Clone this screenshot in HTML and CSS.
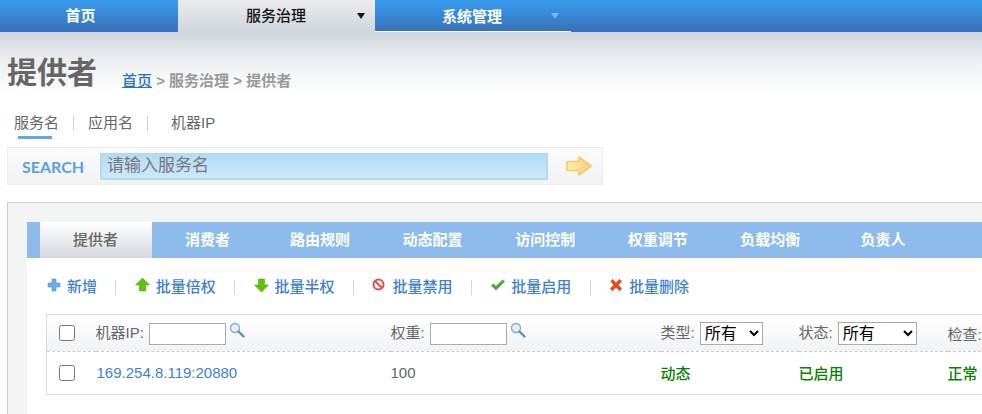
FILE: index.html
```html
<!DOCTYPE html>
<html lang="zh-CN">
<head>
<meta charset="utf-8">
<title>提供者</title>
<link rel="stylesheet" href="styles.css">
</head>
<body>
<nav class="nav">
  <a class="nav-item nav-home">首页</a>
  <a class="nav-item nav-active">服务治理<span class="caret caret-dark"></span></a>
  <a class="nav-item nav-sys">系统管理<span class="caret caret-light"></span></a>
</nav>
<main class="page">
  <header class="head">
    <h1 class="title">提供者</h1>
    <div class="crumbs"><a class="crumb-link">首页</a> &gt; 服务治理 &gt; 提供者</div>
  </header>
  <div class="kinds">
    <span class="kind kind-on">服务名</span><i class="kind-sep"></i>
    <span class="kind">应用名</span><i class="kind-sep"></i>
    <span class="kind kind-ip">机器IP</span>
  </div>
  <form class="search">
    <span class="search-label">SEARCH</span>
    <input class="search-input" type="text" placeholder="请输入服务名">
    <svg class="search-go" width="26" height="20" viewBox="0 0 26 20"><defs><linearGradient id="go" x1="0" x2="1" y1="0" y2="0"><stop offset="0" stop-color="#fff0a8"/><stop offset="1" stop-color="#ffc88a"/></linearGradient></defs><path d="M1 5.500h12V1l12 9-12 9v-4.500H1z" fill="url(#go)" stroke="#f2cc62" stroke-width="1.600" stroke-linejoin="round"/></svg>
  </form>
  <section class="panel">
    <div class="content">
      <div class="tabs">
        <a class="tab tab-on">提供者</a>
        <a class="tab">消费者</a>
        <a class="tab">路由规则</a>
        <a class="tab">动态配置</a>
        <a class="tab">访问控制</a>
        <a class="tab">权重调节</a>
        <a class="tab">负载均衡</a>
        <a class="tab">负责人</a>
      </div>
      <div class="tools">
        <a class="tool tool-add"><svg class="ico" width="14" height="14" viewBox="0 0 14 14"><path d="M5 1h4v4h4v4H9v4H5V9H1V5h4z" fill="#6cb0e6" stroke="#4f92cf" stroke-width=".6"/></svg>新增</a><i class="tool-sep"></i>
        <a class="tool"><svg class="ico" width="15" height="14" viewBox="0 0 15 14"><path d="M7.500 0L14.500 7H10.500V13H4.500V7H.5z" fill="#5fc400" stroke="#3f9a00" stroke-width=".5"/></svg>批量倍权</a><i class="tool-sep"></i>
        <a class="tool"><svg class="ico" width="15" height="14" viewBox="0 0 15 14"><path d="M7.500 14L14.500 7H10.500V1H4.500V7H.5z" fill="#5fc400" stroke="#3f9a00" stroke-width=".5"/></svg>批量半权</a><i class="tool-sep"></i>
        <a class="tool"><svg class="ico" width="14" height="14" viewBox="0 0 14 14"><circle cx="6.500" cy="6.500" r="5" fill="#fff" stroke="#d9534a" stroke-width="2"/><path d="M3 3l7 7" stroke="#d9534a" stroke-width="2"/></svg>批量禁用</a><i class="tool-sep"></i>
        <a class="tool"><svg class="ico" width="15" height="14" viewBox="0 0 15 14"><path d="M1 7.500l2.500-2 2.500 2.500L12.500 1.500 15 3.500 6 12.500z" fill="#4fa83a"/></svg>批量启用</a><i class="tool-sep"></i>
        <a class="tool"><svg class="ico" width="14" height="14" viewBox="0 0 14 14"><path d="M1.500 3.500l2-2.500L7 4.500 10.500 1l2.500 2.500L9.500 7l3.500 3.500-2.500 2.500L7 9.500 3.500 13 1 10.500 4.500 7z" fill="#e8481c"/></svg>批量删除</a>
      </div>
      <div class="table-wrap">
        <table class="grid">
          <colgroup><col class="c-check"><col class="c-ip"><col class="c-weight"><col class="c-type"><col class="c-state"><col class="c-health"></colgroup>
          <thead>
            <tr>
              <th><input class="check" type="checkbox"></th>
              <th>机器IP: <input class="filter" type="text"><svg class="lens" width="16" height="16" viewBox="0 0 16 16"><circle cx="6" cy="6" r="4.500" fill="#dff0f8" stroke="#8fa8b4" stroke-width="1.300"/><path d="M9.500 9.500l5 5" stroke="#4f94c8" stroke-width="2.400" stroke-linecap="round"/></svg></th>
              <th>权重: <input class="filter" type="text"><svg class="lens" width="16" height="16" viewBox="0 0 16 16"><circle cx="6" cy="6" r="4.500" fill="#dff0f8" stroke="#8fa8b4" stroke-width="1.300"/><path d="M9.500 9.500l5 5" stroke="#4f94c8" stroke-width="2.400" stroke-linecap="round"/></svg></th>
              <th>类型: <select class="pick pick-s"><option>所有</option></select></th>
              <th>状态: <select class="pick pick-l"><option>所有</option></select></th>
              <th>检查:</th>
            </tr>
          </thead>
          <tbody>
            <tr>
              <td><input class="check" type="checkbox"></td>
              <td><a class="addr">169.254.8.119:20880</a></td>
              <td>100</td>
              <td class="ok">动态</td>
              <td class="ok">已启用</td>
              <td class="ok">正常</td>
            </tr>
          </tbody>
        </table>
      </div>
    </div>
  </section>
</main>
</body>
</html>
```
FILE: styles.css
```css
* { box-sizing: border-box; }
html, body { height: 100%; }
body {
  margin: 0;
  overflow: hidden;
  background: #fff;
  font-family: "Liberation Sans", "Noto Sans CJK SC", sans-serif;
  font-size: 15px;
  color: #666;
}
.nav {
  display: flex;
  height: 32px;
  background: linear-gradient(#379df0, #3a6fb8);
}
.nav-item {
  position: relative;
  display: block;
  height: 32px;
  line-height: 32px;
  font-size: 15px;
  font-weight: 700;
  color: #fff;
  text-align: center;
}
.nav-home { width: 178px; padding-right: 17px; }
.nav-active {
  width: 197px;
  padding-right: 1px;
  color: #111;
  font-weight: 500;
  background: linear-gradient(#ebecee, #d0d4dc);
}
.nav-sys {
  width: 196px;
  padding-right: 2px;
  border-bottom: 1px solid #fff;
  line-height: 34px;
}
.caret {
  position: absolute;
  top: 13px;
  width: 0;
  height: 0;
  border-style: solid;
  border-width: 6px 4px 0;
}
.caret-dark { right: 10px; border-color: #111 transparent transparent; }
.caret-light { right: 12px; border-color: #7fb4e8 transparent transparent; }
.page {
  padding-top: 21px;
  background: linear-gradient(#d0d4dc, #eceef1 28px, #fff 62px) no-repeat;
}
.head {
  display: flex;
  align-items: flex-end;
  padding-left: 7px;
  height: 40px;
}
.title {
  margin: 0;
  font-size: 30px;
  line-height: 40px;
  font-weight: 700;
  color: #666;
}
.crumbs {
  margin-left: 25px;
  font-size: 15px;
  line-height: 24px;
  font-weight: 700;
  color: #999;
}
.crumb-link { color: #2a6fc8; text-decoration: underline; font-weight: 500; }
.kinds {
  display: flex;
  align-items: center;
  height: 24px;
  margin-top: 18px;
  padding-left: 14px;
}
.kind {
  position: relative;
  font-size: 15px;
  line-height: 24px;
  color: #666;
}
.kind-on::after {
  content: "";
  position: absolute;
  left: 4px;
  right: 7px;
  bottom: -4px;
  height: 3px;
  background: #5ea6ea;
}
.kind-ip { margin-left: 9px; }
.kind-sep {
  width: 1px;
  height: 15px;
  margin: 0 14px;
  background: #d8d0cc;
}
.search {
  display: flex;
  align-items: center;
  width: 596px;
  height: 38px;
  margin: 12px 0 0 7px;
  padding: 0 10px 0 14px;
  border: 1px solid #ececee;
  background: linear-gradient(#fbfbfc, #f1f2f4);
}
.search-label {
  width: 78px;
  font-family: Lato, "Liberation Sans", sans-serif;
  font-size: 16px;
  font-weight: 700;
  color: #5b9fe2;
}
.search-input {
  width: 448px;
  height: 27px;
  padding: 0 5px;
  border: 2px solid #b4d8ee;
  background: linear-gradient(#b4dbf5, #cbe9fb);
  font-family: inherit;
  font-size: 17px;
  color: #666;
}
.search-input::placeholder { color: #777; opacity: 1; }
.search-go { margin-left: 18px; }
.panel {
  margin: 17px 0 0 7px;
  padding: 19px 0 0 19px;
  border-top: 1px solid #ccc;
  border-left: 1px solid #ccc;
  background: #f3f4f4;
  height: 230px;
}
.content {
  height: 100%;
  background: #fff;
}
.tabs {
  display: flex;
  height: 36px;
  padding-left: 13px;
  background: #8cbbec;
}
.tab {
  flex: 0 0 112.600px;
  padding-right: 3px;
  line-height: 36px;
  text-align: center;
  font-size: 15px;
  font-weight: 700;
  color: #fff;
}
.tab-on {
  flex-basis: 112px;
  margin-right: .6px;
  padding-right: 1px;
  font-weight: 500;
  color: #666;
  background: linear-gradient(#fff, #d4d7de);
}
.tools {
  display: flex;
  align-items: center;
  height: 56px;
  padding: 2px 0 0 20px;
}
.tool {
  display: flex;
  align-items: center;
  gap: 6px;
  font-size: 15px;
  line-height: 24px;
  font-weight: 500;
  color: #3f7fd0;
}
.ico { margin-top: -4px; }
.tool-sep {
  width: 1px;
  height: 15px;
  margin: 0 18.400px;
  background: #d8d4d0;
}
.tool-add { gap: 6px; }
.table-wrap { margin-left: 19px; overflow: hidden; }
.grid {
  width: 1000px;
  table-layout: fixed;
  border-collapse: collapse;
  border: 1px solid #dcdcdc;
  border-right: 0;
}
.c-check { width: 49px; }
.c-ip { width: 295px; }
.c-weight { width: 270px; }
.c-type { width: 138px; }
.c-state { width: 149px; }
th, td {
  padding: 0;
  text-align: left;
  white-space: nowrap;
  overflow: hidden;
  font-size: 15px;
  color: #666;
}
th {
  height: 37px;
  font-weight: 400;
  background: linear-gradient(#fff, #f0f1f3);
  border-bottom: 1px dashed #ccc;
}
td { height: 43px; padding-bottom: 2px; }
td:first-child { padding-bottom: 0; }
.check {
  display: block;
  width: 16px;
  height: 16px;
  margin: 0 0 0 12px;
}
.filter {
  width: 77px;
  height: 22px;
  margin-left: 1px;
  padding: 0;
  border: 1px solid #aaa;
  background: #fff;
  vertical-align: middle;
}
.lens { margin-left: 3px; vertical-align: 0; }
.pick {
  height: 23px;
  margin-left: 1px;
  border: 1px solid #aaa;
  border-radius: 0;
  background: #fff;
  font-family: inherit;
  font-size: 16px;
  color: #000;
  vertical-align: middle;
}
.pick-s { width: 63px; }
.pick-l { width: 79px; }
.addr { margin-left: 1px; color: #3f7fd0; font-size: 15px; }
.ok { color: #0a8000; font-weight: 500; }
```
